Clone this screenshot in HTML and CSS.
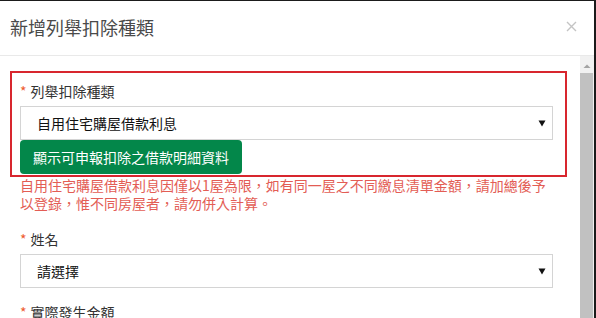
FILE: index.html
```html
<!DOCTYPE html>
<html lang="zh-Hant">
<head>
<meta charset="utf-8">
<link rel="stylesheet" href="styles.css">
</head>
<body>
<div class="modal">
  <div class="modal-header">
    <h4 class="title">新增列舉扣除種類</h4>
    <svg class="close" width="11" height="11" viewBox="0 0 11 11"><path d="M1 1L10 10M10 1L1 10" stroke="#c4c4c4" stroke-width="1.4" fill="none"/></svg>
  </div>
  <div class="modal-main">
    <div class="modal-body">
      <div class="highlight">
        <div class="field-label"><span class="req">*</span>列舉扣除種類</div>
        <div class="select"><span>自用住宅購屋借款利息</span><svg class="caret" width="8" height="7" viewBox="0 0 8 7"><path d="M0.5 0.5H7.5L4 6.5Z" fill="#111"/></svg></div>
        <div class="btn">顯示可申報扣除之借款明細資料</div>
      </div>
      <p class="help">自用住宅購屋借款利息因僅以1屋為限，如有同一屋之不同繳息清單金額，請加總後予以登錄，惟不同房屋者，請勿併入計算。</p>
      <div class="group">
        <div class="field-label"><span class="req">*</span>姓名</div>
        <div class="select"><span>請選擇</span><svg class="caret" width="8" height="7" viewBox="0 0 8 7"><path d="M0.5 0.5H7.5L4 6.5Z" fill="#111"/></svg></div>
      </div>
      <div class="group">
        <div class="field-label"><span class="req">*</span>實際發生金額</div>
      </div>
    </div>
    <div class="scrollbar">
      <svg class="sb-arrow" width="14" height="14" viewBox="0 0 14 14"><path d="M3.5 9H10.5L7 5.5Z" fill="#a3a3a3"/></svg>
      <div class="sb-thumb"></div>
    </div>
  </div>
</div>
</body>
</html>
```
FILE: styles.css
```css
html, body {
  margin: 0;
  padding: 0;
}
body {
  background: #1b1b1b;
  width: 596px;
  height: 318px;
  overflow: hidden;
  font-family: "Noto Sans CJK TC", "Liberation Sans", sans-serif;
}
.modal {
  margin-top: 1px;
  width: 594px;
  height: 317px;
  background: #fff;
  display: flex;
  flex-direction: column;
  overflow: hidden;
}
.modal-header {
  height: 55px;
  border-bottom: 1px solid #e9e9e9;
  display: flex;
  align-items: center;
  justify-content: space-between;
  padding: 0 17px 3px 10px;
  box-sizing: border-box;
  flex-shrink: 0;
}
.title {
  margin: 0;
  font-size: 18px;
  font-weight: 400;
  color: #4a4a4a;
  line-height: 24px;
}
.close {
  display: block;
}
.modal-main {
  flex: 1;
  display: flex;
  overflow: hidden;
}
.modal-body {
  flex: 1;
  padding: 15px 13px 0 10px;
}
.highlight {
  border: 2px solid #d8262e;
  padding: 8px 12px 1px 8px;
}
.field-label {
  font-size: 14px;
  line-height: 20px;
  color: #333;
  margin-bottom: 5px;
}
.req {
  color: #ee5a2e;
  margin-right: 4px;
}
.select {
  height: 34px;
  border: 1px solid #d4d4d4;
  box-sizing: border-box;
  display: flex;
  align-items: center;
  justify-content: space-between;
  padding: 0 6px 0 16px;
  font-size: 14px;
  color: #111;
}
.caret {
  display: block;
}
.btn {
  display: inline-block;
  background: #03874a;
  color: #fff;
  font-size: 14px;
  line-height: 34px;
  height: 34px;
  padding: 0 13px;
  border-radius: 4px;
}
.help {
  margin: -1px 14px 0 10px;
  font-size: 14px;
  line-height: 18px;
  color: #e35d55;
}
.group {
  margin-left: 10px;
}
.help + .group {
  margin-top: 17px;
}
.group + .group {
  margin-top: 14px;
}
.group .select {
  width: 533px;
}
.scrollbar {
  width: 14px;
  background: #f1f1f1;
  display: flex;
  flex-direction: column;
  align-items: center;
  flex-shrink: 0;
}
.sb-arrow {
  display: block;
  margin-top: 3px;
}
.sb-thumb {
  width: 13px;
  flex: 1;
  background: #c1c1c1;
  align-self: flex-start;
}
```
